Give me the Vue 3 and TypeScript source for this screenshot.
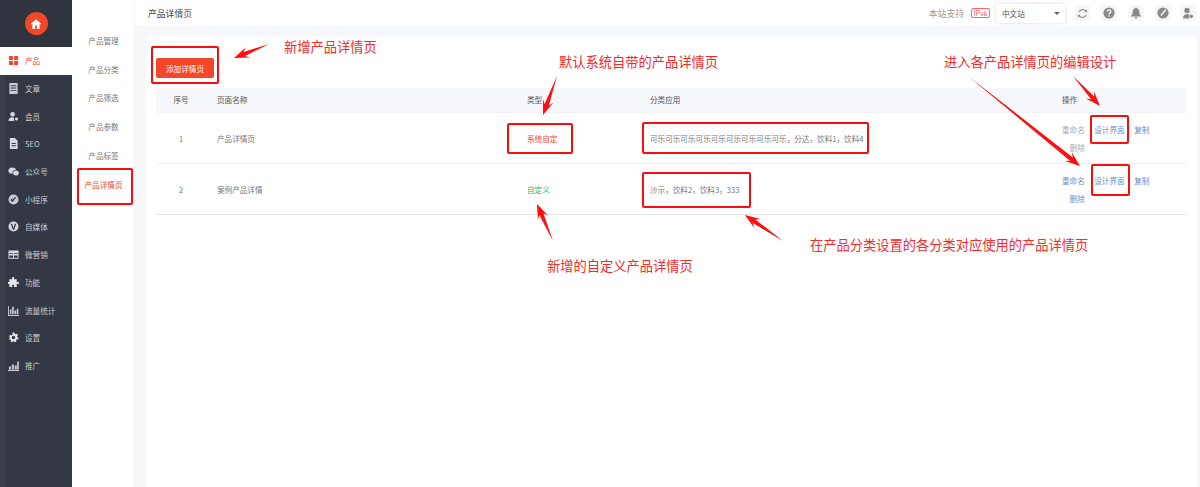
<script setup lang="ts">
interface NavItem { label: string; icon: string; active?: boolean }
const nav: NavItem[] = [
  { label: '产品', icon: 'grid', active: true },
  { label: '文章', icon: 'article' },
  { label: '会员', icon: 'users' },
  { label: 'SEO', icon: 'file' },
  { label: '公众号', icon: 'wechat' },
  { label: '小程序', icon: 'mini' },
  { label: '自媒体', icon: 'media' },
  { label: '微营销', icon: 'market' },
  { label: '功能', icon: 'puzzle' },
  { label: '流量统计', icon: 'bars' },
  { label: '设置', icon: 'gear' },
  { label: '推广', icon: 'promo' }
]
const sub = ['产品管理', '产品分类', '产品筛选', '产品参数', '产品标签', '产品详情页']
interface Row { no: number; name: string; type: string; custom: boolean; cats: string; muted: boolean }
const rows: Row[] = [
  { no: 1, name: '产品详情页', type: '系统自定', custom: false, cats: '可乐可乐可乐可乐可乐可乐可乐可乐可乐，分达，饮料1，饮料4', muted: true },
  { no: 2, name: '案例产品详情', type: '自定义', custom: true, cats: '沙示，饮料2，饮料3，333', muted: false }
]
const notes = [
  { text: '新增产品详情页', x: 284, y: 38 },
  { text: '默认系统自带的产品详情页', x: 559, y: 53 },
  { text: '进入各产品详情页的编辑设计', x: 944, y: 53 },
  { text: '在产品分类设置的各分类对应使用的产品详情页', x: 810, y: 236 },
  { text: '新增的自定义产品详情页', x: 547, y: 257 }
]
const boxes = [
  { x: 152, y: 47, w: 66, h: 36 },
  { x: 78, y: 169, w: 54, h: 35 },
  { x: 508, y: 124, w: 64, h: 29 },
  { x: 643, y: 123, w: 225, h: 30 },
  { x: 643, y: 173, w: 107, h: 34 },
  { x: 1091, y: 116, w: 37, h: 27 },
  { x: 1092, y: 165, w: 37, h: 30 }
]
function arrow(x1: number, y1: number, x2: number, y2: number): string {
  const dx = x2 - x1, dy = y2 - y1
  const len = Math.hypot(dx, dy)
  const ux = dx / len, uy = dy / len
  const nx = -uy, ny = ux
  const p = (along: number, side: number) =>
    `${(x2 - ux * along + nx * side).toFixed(1)},${(y2 - uy * along + ny * side).toFixed(1)}`
  return [`${x1},${y1}`, p(11, 2.2), p(15, 5.5), `${x2},${y2}`, p(15, -5.5), p(11, -2.2)].join(' ')
}
const arrows = [
  arrow(269, 44, 234, 58),
  arrow(557, 76, 543, 115),
  arrow(553, 241, 537, 204),
  arrow(783, 241, 745, 215),
  arrow(1073, 76, 1100, 106),
  arrow(968, 76, 1080, 166)
]
</script>

<template>
  <div class="page">
    <aside class="side">
      <div class="logo">
        <span class="logo-dot">
          <svg viewBox="0 0 12 12" width="12" height="12"><path fill="#fff" d="M6 1.2 .8 5.8l.7.8.9-.8V11h2.7V7.6h1.8V11h2.7V5.8l.9.8.7-.8z" /></svg>
        </span>
      </div>
      <div v-for="n in nav" :key="n.label" class="nav" :class="{ on: n.active }">
        <svg class="nav-ic" viewBox="0 0 12 12" width="12" height="12">
          <g v-if="n.icon === 'grid'" fill="#f4472a"><rect x="1" y="1" width="4.4" height="4.4" rx=".6" /><rect x="6.6" y="1" width="4.4" height="4.4" rx=".6" /><rect x="1" y="6.6" width="4.4" height="4.4" rx=".6" /><rect x="6.6" y="6.6" width="4.4" height="4.4" rx=".6" /></g>
          <path v-else-if="n.icon === 'article'" fill="#c9cbd1" fill-rule="evenodd" d="M1.500 0h9v12h-9zM3 2.500v1h6v-1zM3 5v1h6V5zm0 2.500v1h6v-1z" />
          <path v-else-if="n.icon === 'users'" fill="#d5d7dc" d="M5 1a2.600 2.600 0 1 1 0 5.200A2.600 2.600 0 0 1 5 1zM.5 11c0-2.600 1.800-4.200 4-4.200 1 0 1.800.3 2.400.8C6.300 8.600 6.300 10 7 11zM9.300 7a1.700 1.700 0 1 1 0 3.400 1.700 1.700 0 0 1 0-3.400z" />
          <path v-else-if="n.icon === 'file'" fill="#d5d7dc" fill-rule="evenodd" d="M2 0h5.500L10.500 3v9H2zM4 5.500v1h4.500v-1zM4 8v1h4.500V8z" />
          <path v-else-if="n.icon === 'wechat'" fill="#d5d7dc" d="M4.700 1.500C2.300 1.500.3 3 .3 4.900c0 1.100.7 2 1.700 2.700l-.4 1.200 1.400-.7c.5.100 1.100.2 1.600.2h.4a3 3 0 0 1-.1-.9c0-1.800 1.700-3.200 3.800-3.200h.4C8.700 2.600 6.900 1.500 4.700 1.500zM8.700 5c-1.800 0-3.300 1.200-3.300 2.700s1.500 2.700 3.300 2.700c.4 0 .8-.1 1.100-.2l1.100.6-.3-1c.8-.5 1.300-1.300 1.300-2.100C12 6.200 10.500 5 8.700 5z" />
          <path v-else-if="n.icon === 'mini'" fill="#c9cbd1" fill-rule="evenodd" d="M6 .5a5.500 5.500 0 1 1 0 11 5.500 5.500 0 0 1 0-11zM8.800 3.500C7.500 3.300 6.300 4 5.800 5.300l-.5 1.400c-.2.400-.8.300-.8-.2 0-.3.200-.5.500-.6V4.800C3.800 5 3 5.700 3 6.700c0 1.200 1.300 2 2.500 1.500.7-.3 1-.9 1.200-1.500l.4-1.200c.2-.5.800-.8 1.700-.7z" />
          <path v-else-if="n.icon === 'media'" fill="#d5d7dc" fill-rule="evenodd" d="M6 .5a5.500 5.500 0 1 1 0 11 5.500 5.500 0 0 1 0-11zM3 3l2.300 6.500h1.400L9 3H7.500L6 7.500 4.500 3z" />
          <path v-else-if="n.icon === 'market'" fill="#d5d7dc" fill-rule="evenodd" d="M.5 1.500h11v9H.5zM1.500 4.500v1h4v-1zm5 0v1h4v-1zm-5 2.500v2.500h4V7zm5 0v2.500h4V7z" />
          <path v-else-if="n.icon === 'puzzle'" fill="#e6e7ea" d="M4.500 1C4.500.3 5 0 5.600 0s1.100.4 1.100 1c0 .5-.3.800-.3 1.200 0 .2.100.3.400.3h2.700v2.800c0 .3.200.4.400.4.400 0 .6-.4 1.100-.4.600 0 1 .6 1 1.200s-.4 1.200-1 1.200c-.5 0-.7-.4-1.100-.4-.2 0-.4.100-.4.400V11H6.800c-.3 0-.4-.2-.4-.4 0-.4.400-.6.400-1.100 0-.6-.6-1-1.200-1s-1.200.4-1.200 1c0 .5.400.7.400 1.100 0 .2-.1.400-.4.400H1.500V7.800c0-.3-.2-.4-.4-.4-.4 0-.5.300-1.100.3V5.200c.6 0 .8.300 1.100.3.200 0 .4-.1.400-.4V2.500h2.700c.3 0 .4-.1.400-.3 0-.4-.4-.700-.4-1.200z" />
          <path v-else-if="n.icon === 'bars'" fill="#c9cbd1" d="M0 1h1v10h11v1H0zM2 5h1.800v5H2zm2.500-3h1.800v8H4.500zM7 6h1.800v4H7zm2.500-2h1.800v6H9.500z" />
          <path v-else-if="n.icon === 'gear'" fill="#e6e7ea" fill-rule="evenodd" d="M5 .5h2l.3 1.500 1 .5 1.400-.7 1.200 1.600-1 1.100.2 1 1.400.7-.5 1.900-1.500-.1-.7.900.4 1.400-1.800.9-.9-1.200H5.500l-.9 1.200-1.800-.9.400-1.400-.7-.9-1.500.1L.5 7.500l1.400-.7.200-1-1-1.100L2.300 3.100l1.400.7 1-.5zM6 4.200a1.900 1.900 0 1 0 0 3.800 1.900 1.900 0 0 0 0-3.800z" />
          <path v-else fill="#c9cbd1" d="M0 10.500h12V12H0zM1 7h2.200v3H1zm3.200-2h2.200v5H4.200zm3.200 1h2.200v4H7.400zM10 1.500h1.800V10H10z" />
        </svg>
        <span>{{ n.label }}</span>
      </div>
    </aside>

    <nav class="subnav">
      <div v-for="(s, i) in sub" :key="s" class="sub" :class="{ on: i === 5 }">{{ s }}</div>
    </nav>

    <div class="main">
      <header class="top">
        <div class="title">产品详情页</div>
        <div class="tools">
          <span class="support">本站支持</span>
          <span class="ipv6">IPv6</span>
          <div class="lang"><span>中文站</span><i class="caret"></i></div>
          <span class="round">
            <svg viewBox="0 0 12 12" width="11" height="11"><path fill="none" stroke="#8a8a8a" stroke-width="1.300" d="M2 4.500A4.300 4.300 0 0 1 9.700 3.700M10 7.500A4.300 4.300 0 0 1 2.300 8.300" /><path fill="#8a8a8a" d="m8.200 4.600 2.900-.1-.3-3zM3.800 7.400l-2.900.1.300 3z" /></svg>
          </span>
          <span class="round">
            <svg viewBox="0 0 12 12" width="12" height="12"><circle cx="6" cy="6" r="5.600" fill="#8a8a8a" /><path fill="none" stroke="#f5f5f5" stroke-width="1.300" d="M4.300 4.600c0-2.200 3.500-2.200 3.500 0 0 1.300-1.800 1.300-1.800 2.700" /><rect x="5.300" y="8.200" width="1.400" height="1.400" fill="#f5f5f5" /></svg>
          </span>
          <span class="round">
            <svg viewBox="0 0 12 12" width="12" height="12"><path fill="#8a8a8a" d="M6 .5c.6 0 .9.400 1 .9 1.700.5 2.400 1.900 2.400 3.600 0 2 .6 3 1.600 3.900v.6H1v-.6C2 8 2.600 7 2.600 5c0-1.700.7-3.100 2.400-3.600.1-.5.400-.9 1-.9zM4.600 10.200h2.800C7.300 11 6.800 11.500 6 11.500s-1.300-.5-1.400-1.300z" /></svg>
          </span>
          <span class="round">
            <svg viewBox="0 0 12 12" width="12" height="12"><circle cx="6" cy="6" r="5.600" fill="#8a8a8a" /><path fill="none" stroke="#f5f5f5" stroke-width="1.400" d="M8.800 2.800 6 6 4 8.500" /></svg>
          </span>
          <span class="round last">
            <svg viewBox="0 0 12 12" width="12" height="12"><path fill="#8a8a8a" d="M5 .8a2.700 2.700 0 1 1 0 5.400A2.700 2.700 0 0 1 5 .8zM1 11.500c0-2.800 1.700-4.500 4-4.500 1 0 1.700.3 2.300.8-.5 1.100-.5 2.500.2 3.700zM9.300 7.500a1.800 1.800 0 1 1 0 3.600 1.800 1.800 0 0 1 0-3.600z" /></svg>
          </span>
        </div>
      </header>

      <section class="panel">
        <button class="add" type="button">添加详情页</button>
        <div class="table">
          <div class="tr head">
            <div class="td center">序号</div>
            <div class="td">页面名称</div>
            <div class="td">类型</div>
            <div class="td">分类应用</div>
            <div class="td">操作</div>
          </div>
          <div v-for="r in rows" :key="r.no" class="tr body">
            <div class="td center">{{ r.no }}</div>
            <div class="td">{{ r.name }}</div>
            <div class="td" :class="r.custom ? 'green' : 'red'">{{ r.type }}</div>
            <div class="td">{{ r.cats }}</div>
            <div class="td ops">
              <div class="ops-col" :class="{ muted: r.muted }"><a>重命名</a><a>删除</a></div>
              <a>设计界面</a>
              <a>复制</a>
            </div>
          </div>
        </div>
      </section>
    </div>

    <svg class="marks" viewBox="0 0 1200 487" width="1200" height="487">
      <rect v-for="b in boxes" :key="b.x + '-' + b.y" :x="b.x" :y="b.y" :width="b.w" :height="b.h" rx="1" fill="none" stroke="#fb0d0d" stroke-width="2" />
      <polygon v-for="a in arrows" :key="a" :points="a" fill="#fb1111" />
    </svg>
    <span v-for="n in notes" :key="n.text" class="note" :style="{ left: n.x + 'px', top: n.y + 'px' }">{{ n.text }}</span>
  </div>
</template>

<style>
html, body { margin: 0; background: #fff; }
</style>

<style scoped>
.page {
  position: relative;
  display: flex;
  width: 1200px;
  height: 487px;
  overflow: hidden;
  font-family: "Noto Sans CJK SC", "Noto Sans", sans-serif;
  font-size: 7.600px;
  color: #666;
}
.side {
  flex: 0 0 72px;
  background: #343844;
  box-shadow: inset 5px 0 0 #3a3f49;
}
.logo {
  height: 47px;
  display: flex;
  align-items: center;
  justify-content: center;
  background: #30343f;
}
.logo-dot {
  width: 23px;
  height: 23px;
  border-radius: 50%;
  background: #f4472a;
  display: flex;
  align-items: center;
  justify-content: center;
}
.nav {
  height: 27.700px;
  display: flex;
  align-items: center;
  gap: 6px;
  padding-left: 8px;
  color: #c9cbd1;
}
.nav.on { background: #fff; color: #f4472a; }
.nav-ic { flex: none; width: 11px; height: 11px; }
.subnav {
  flex: 0 0 62px;
  margin-left: 1px;
  padding-top: 26px;
  background: #fff;
  border-right: 1px solid #f1f2f6;
  box-sizing: border-box;
}
.sub {
  height: 28.800px;
  display: flex;
  align-items: center;
  justify-content: center;
  color: #777;
}
.sub:last-child { padding-top: 1px; box-sizing: border-box; }
.sub.on { color: #f4472a; }
.main {
  flex: 1;
  min-width: 0;
  background: #f7f8fb;
  display: flex;
  flex-direction: column;
}
.top {
  height: 26px;
  flex: none;
  background: #fff;
  display: flex;
  align-items: center;
  justify-content: space-between;
  padding: 0 4px 0 13px;
}
.title { font-size: 8.800px; color: #444; }
.tools { display: flex; align-items: center; height: 22px; }
.support { color: #999; font-size: 8.800px; }
.ipv6 {
  margin-left: 7px;
  width: 19px;
  height: 10px;
  box-sizing: border-box;
  border: 1px solid #f66;
  border-radius: 2px;
  color: #f55;
  font-size: 7px;
  line-height: 8px;
  text-align: center;
}
.lang {
  margin-left: 6px;
  width: 69px;
  height: 19px;
  box-sizing: border-box;
  display: flex;
  align-items: center;
  justify-content: space-between;
  padding: 0 5px 0 6px;
  background: #fff;
  box-shadow: 0 0 3px rgba(0, 0, 0, .16);
  color: #555;
}
.caret {
  width: 0;
  height: 0;
  border: 3px solid transparent;
  border-top: 3px solid #666;
  border-bottom: 0;
}
.round {
  margin-left: 11px;
  width: 16px;
  height: 16px;
  border-radius: 4px;
  background: #f6f6f6;
  display: flex;
  align-items: center;
  justify-content: center;
}
.lang + .round { margin-left: 9px; }
.round.last { margin-left: 9px; }
.panel {
  flex: 1;
  margin: 11px 3px 0 11px;
  padding: 21px 0 0 10px;
  background: #fff;
}
.add {
  display: block;
  width: 58px;
  height: 20px;
  padding: 0;
  border: 0;
  border-radius: 2px;
  background: #f4472a;
  color: #fff;
  font: inherit;
}
.table { margin-top: 10px; width: 1030px; }
.tr {
  display: grid;
  grid-template-columns: 50px 310px 123px 412px 135px;
}
.td { padding-left: 11px; display: flex; align-items: center; }
.td:first-child { padding-left: 0; }
.center { justify-content: center; }
.head {
  height: 25px;
  padding-bottom: 1px;
  background: #f6f7fb;
  border-bottom: 1px solid #f1f2f5;
  box-sizing: border-box;
  color: #555;
}
.body {
  height: 51px;
  box-sizing: border-box;
  border-bottom: 1px solid #eef0f3;
  color: #777;
}
.body:last-child { border-bottom-color: #e2e3e6; }
.red { color: #f4472a; }
.green { color: #3cb34a; }
.ops { align-items: flex-start; padding-top: 7.500px; color: #6d8fc9; gap: 9.500px; }
.ops a { line-height: 18px; }
.ops-col { display: flex; flex-direction: column; align-items: flex-end; }
.ops-col.muted { color: #aaa; }
.marks { position: absolute; left: 0; top: 0; pointer-events: none; }
.note {
  position: absolute;
  font-size: 13.250px;
  line-height: 18px;
  color: #f62a2a;
  white-space: nowrap;
}
</style>
